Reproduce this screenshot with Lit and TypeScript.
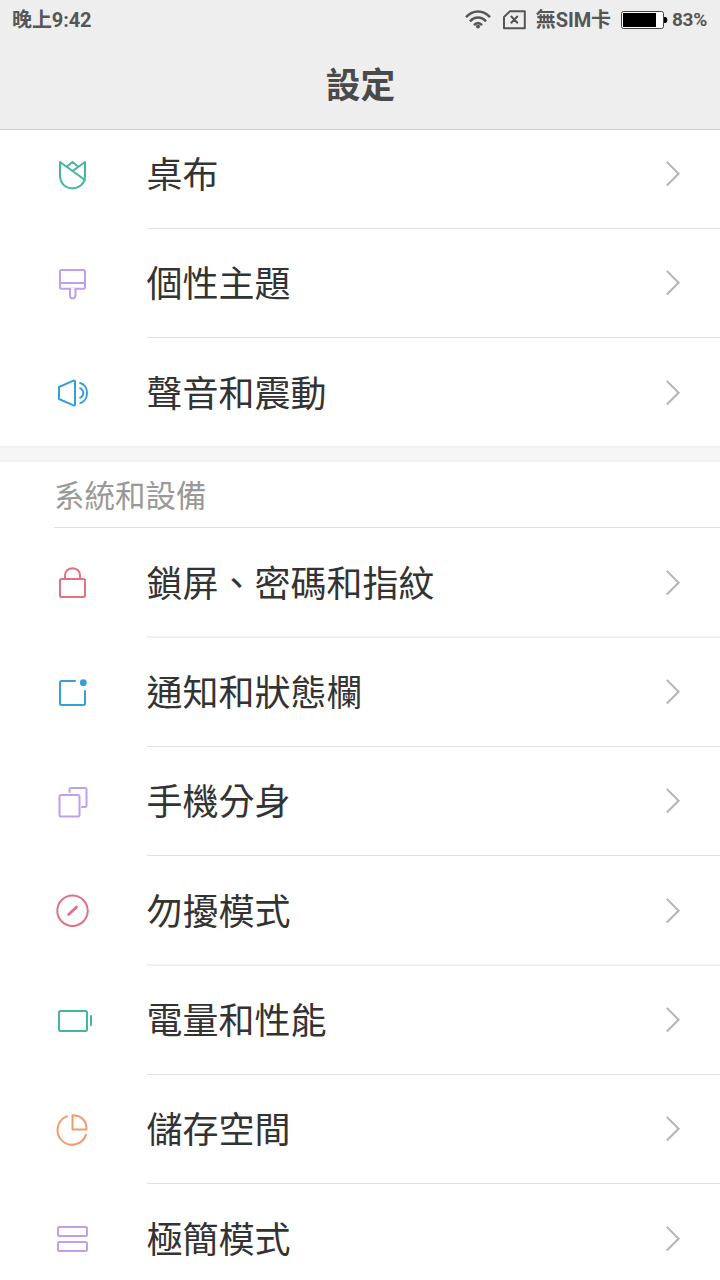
import { LitElement, html, css, svg } from "lit";
import { customElement, property } from "lit/decorators.js";

const teal = "#45b5a0";
const violet = "#bf9fee";
const blue = "#35a0d8";
const rose = "#e56f83";
const orange = "#f49b6c";

// Glyphs share a 40x40 box.
const glyphs: Record<string, { color: string; shape: unknown }> = {
  wallpaper: {
    color: teal,
    shape: svg`<path d="M8 8L33 26M8 8V21.5C8 29.5 13.5 34.3 20.5 34.3S33 29.5 33 21.5V8L21 16.8M15.2 12.2L20.5 8L26 12.5"/>`,
  },
  theme: {
    color: violet,
    shape: svg`<rect x="8" y="7" width="25" height="18.8" rx="1.5"/><path d="M8 20H33M18 26V32.5Q18 35.5 20.5 35.5T23.5 32.5V26"/><path stroke="#fff" stroke-linecap="butt" d="M19 25.8H22.5"/>`,
  },
  sound: {
    color: blue,
    shape: svg`<path d="M21.5 7.6Q23 7 23 8.5V31.5Q23 33 21.5 32.4L7 26V14Z"/><path stroke-linecap="butt" d="M27.5 9.8C37.5 12 37.5 28 27.5 30.4M27.5 14.8C32.5 17 32.5 23 27.5 25.2"/>`,
  },
  lock: {
    color: rose,
    shape: svg`<rect x="8" y="16" width="25" height="18" rx="1.5"/><path d="M13 16V12.5C13 2.8 28 2.8 28 12.5V16"/>`,
  },
  notice: {
    color: blue,
    shape: svg`<path d="M23 9H9.5Q8 9 8 10.5V31.5Q8 33 9.5 33H31.5Q33 33 33 31.5V19"/><circle cx="31.3" cy="10.7" r="3.4" fill="${blue}" stroke="none"/>`,
  },
  clone: {
    color: violet,
    shape: svg`<rect x="7.5" y="14" width="20" height="21.5" rx="1.5"/><path d="M17.5 11V8.5Q17.5 7 19 7H33Q34.5 7 34.5 8.5V25Q34.5 26 33 26H30"/>`,
  },
  quiet: {
    color: rose,
    shape: svg`<circle cx="20.5" cy="19.7" r="15.2"/><path stroke-width="2.8" d="M16.6 23.6L24.6 15.9"/>`,
  },
  power: {
    color: teal,
    shape: svg`<rect x="7" y="11" width="28" height="20" rx="1.5"/><path stroke-linecap="butt" d="M39 15.3V25.7"/>`,
  },
  storage: {
    color: orange,
    shape: svg`<path d="M15 7.4A14.6 14.6 0 1 0 34 25.6M20.5 6.2V20.6H34.6C34.6 11.5 29 6.2 20.5 6.2Z"/>`,
  },
  simple: {
    color: violet,
    shape: svg`<rect x="6" y="8" width="29" height="9" rx="1.5"/><rect x="6" y="23" width="29" height="9" rx="1.5"/>`,
  },
};

@customElement("setting-row")
class SettingRow extends LitElement {
  @property() icon = "";
  @property() label = "";

  static styles = css`
    :host {
      display: flex;
      align-items: flex-start;
      box-sizing: border-box;
      height: 109px;
      padding-left: 52px;
      flex: none;
    }
    .glyph {
      width: 40px;
      height: 40px;
      flex: none;
      margin: calc(34px + var(--drop, 0px)) 55px 0 0;
    }
    .body {
      flex: 1;
      box-sizing: border-box;
      height: 100%;
      display: flex;
      align-items: flex-start;
      justify-content: space-between;
      padding: var(--drop, 0px) 38px 0 0;
      border-bottom: var(--rule, 1px solid #e0e0e0);
    }
    .label {
      margin: 30px 0 0 -0.4px;
      font-size: 36px;
      line-height: 52px;
      color: #333;
      white-space: nowrap;
    }
    .arrow {
      width: 18px;
      height: 28px;
      margin-top: 40px;
      flex: none;
    }
  `;

  render() {
    const glyph = glyphs[this.icon];
    return html`
      <svg class="glyph" viewBox="0 0 40 40" fill="none" stroke=${glyph.color} stroke-width="2" stroke-linecap="round" stroke-linejoin="round">
        ${glyph.shape}
      </svg>
      <div class="body">
        <span class="label">${this.label}</span>
        <svg class="arrow" viewBox="0 0 18 28" fill="none" stroke="#b4b4b4" stroke-width="2">
          <path d="M2.8 1.9L14.6 13.7L2.8 25.5" />
        </svg>
      </div>
    `;
  }
}

@customElement("status-bar")
class StatusBar extends LitElement {
  static styles = css`
    :host {
      display: flex;
      align-items: center;
      justify-content: space-between;
      height: 40px;
      padding: 0 12px;
      color: #565656;
      font-size: 20px;
      letter-spacing: -0.1px;
      line-height: 40px;
      font-weight: 700;
    }
    .status {
      display: flex;
      align-items: center;
    }
    .wifi { width: 26px; height: 20px; margin-right: 11px; }
    .card { width: 24px; height: 20px; margin-right: 10px; }
    .battery { width: 48px; height: 20px; margin: 0 4px 0 9px; }
    .percent { width: 36px; font-size: 19px; letter-spacing: -0.3px; white-space: nowrap; }
  `;

  render() {
    return html`
      <span>晚上9:42</span>
      <div class="status">
        <svg class="wifi" viewBox="0 0 26 20" fill="none" stroke="#565656" stroke-width="2.5">
          <path d="M1 7.2C8 -0.4 18 -0.4 25 7.2M5 11.3C9.8 6.2 16.2 6.2 21 11.3M9 15.2C11.5 12.4 14.5 12.4 17 15.2" />
          <circle cx="13" cy="16.6" r="2" fill="#565656" stroke="none" />
        </svg>
        <svg class="card" viewBox="0 0 24 20" fill="none" stroke="#565656" stroke-width="2" stroke-linejoin="round">
          <path d="M8 1.2H22.8V18.2H2V7ZM8.8 6L15.8 13.2M15.8 6L8.8 13.2" />
        </svg>
        <span>無SIM卡</span>
        <svg class="battery" viewBox="0 0 48 20">
          <rect x="1.5" y="1.5" width="42" height="17" rx="2" fill="#fff" stroke="#444" />
          <rect x="3" y="3" width="33" height="14" />
          <path d="M44 7H45Q47.3 7 47.3 10T45 13H44Z" />
        </svg>
        <span class="percent">83%</span>
      </div>
    `;
  }
}

@customElement("app-root")
class AppRoot extends LitElement {
  static styles = css`
    :host {
      display: flex;
      flex-direction: column;
      width: 720px;
      height: 1280px;
      overflow: hidden;
      background: #fff;
      font-family: Roboto, "Noto Sans CJK TC", sans-serif;
    }
    .top {
      flex: none;
      height: 129px;
      background: #eee;
      border-bottom: 1px solid #d0d0d0;
    }
    .title {
      margin: 0;
      height: 89px;
      padding-left: 1px;
      font-size: 34.7px;
      line-height: 93px;
      font-weight: 700;
      text-align: center;
      color: #4a4a4a;
    }
    .list {
      flex: 1;
      min-height: 0;
      display: flex;
      flex-direction: column;
      overflow: hidden;
    }
    .first { margin-top: -10px; }
    .low { --drop: 1px; }
    .tall { height: 110px; --rule: 2px solid #f0f0f0; }
    .end { height: 108px; --rule: none; }
    .gap {
      flex: none;
      box-sizing: border-box;
      height: 16px;
      background: #f6f6f6;
      border-top: 2px solid #f1f1f1;
      border-bottom: 2px solid #f1f1f1;
    }
    .heading {
      flex: none;
      height: 65px;
      margin: 0 0 0 54px;
      border-bottom: 1px solid #e0e0e0;
      font-size: 30.5px;
      line-height: 70px;
      font-weight: 400;
      color: #999;
    }
  `;

  render() {
    return html`
      <header class="top">
        <status-bar></status-bar>
        <h1 class="title">設定</h1>
      </header>
      <main class="list">
        <setting-row class="first" icon="wallpaper" label="桌布"></setting-row>
        <setting-row icon="theme" label="個性主題"></setting-row>
        <setting-row class="low end" icon="sound" label="聲音和震動"></setting-row>
        <div class="gap"></div>
        <h2 class="heading">系統和設備</h2>
        <setting-row class="low tall" icon="lock" label="鎖屏、密碼和指紋"></setting-row>
        <setting-row icon="notice" label="通知和狀態欄"></setting-row>
        <setting-row icon="clone" label="手機分身"></setting-row>
        <setting-row class="low tall" icon="quiet" label="勿擾模式"></setting-row>
        <setting-row icon="power" label="電量和性能"></setting-row>
        <setting-row icon="storage" label="儲存空間"></setting-row>
        <setting-row class="low end" icon="simple" label="極簡模式"></setting-row>
      </main>
    `;
  }
}
